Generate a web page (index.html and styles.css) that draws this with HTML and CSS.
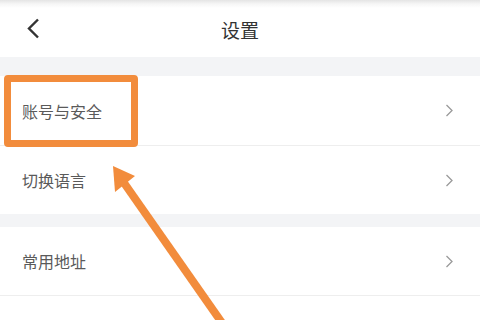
FILE: index.html
```html
<!DOCTYPE html>
<html lang="zh-CN">
<head>
<meta charset="utf-8">
<title>设置</title>
<link rel="stylesheet" href="styles.css">
</head>
<body>
<div class="page">
  <header class="header">
    <svg class="back" width="14" height="21" viewBox="0 0 14 21"><path d="M12 1.5 L3 10.5 L12 19.5" fill="none" stroke="#333" stroke-width="2.4" stroke-linejoin="miter"/></svg>
    <h1 class="title">设置</h1>
  </header>
  <div class="gap gap-top"></div>
  <section class="group">
    <div class="row row-first"><span class="label">账号与安全</span><svg class="chev" width="9" height="13" viewBox="0 0 9 13"><path d="M1.5 1 L7 6.5 L1.5 12" fill="none" stroke="#9a9a9a" stroke-width="1.3"/></svg></div>
    <div class="row"><span class="label">切换语言</span><svg class="chev" width="9" height="13" viewBox="0 0 9 13"><path d="M1.5 1 L7 6.5 L1.5 12" fill="none" stroke="#9a9a9a" stroke-width="1.3"/></svg></div>
  </section>
  <div class="gap gap-mid"></div>
  <section class="group">
    <div class="row"><span class="label">常用地址</span><svg class="chev" width="9" height="13" viewBox="0 0 9 13"><path d="M1.5 1 L7 6.5 L1.5 12" fill="none" stroke="#9a9a9a" stroke-width="1.3"/></svg></div>
    <div class="row"></div>
  </section>
  <div class="highlight"></div>
  <svg class="arrow" width="480" height="320" viewBox="0 0 480 320">
    <line x1="122" y1="180" x2="227" y2="330" stroke="#f28c3c" stroke-width="8"/>
    <polygon points="113,166 135,176 115,192" fill="#f28c3c"/>
  </svg>
</div>
</body>
</html>
```
FILE: styles.css
```css
html, body {
  margin: 0;
  padding: 0;
  background: #ffffff;
  overflow: hidden;
}
.page {
  position: relative;
  width: 480px;
  height: 320px;
  overflow: hidden;
  font-family: "Noto Sans CJK SC", "Noto Sans", sans-serif;
}
.header {
  height: 57px;
  display: flex;
  align-items: center;
  justify-content: center;
  position: relative;
  background: linear-gradient(to bottom, #e4e4e4 0px, #f6f6f6 4px, #ffffff 8px);
}
.back {
  position: absolute;
  left: 26px;
  top: 18px;
}
.title {
  margin: 0;
  font-size: 19px;
  font-weight: normal;
  color: #333333;
  line-height: 1;
  padding-top: 1px;
}
.gap {
  background: #f3f4f6;
}
.gap-top {
  height: 19px;
}
.gap-mid {
  height: 13px;
}
.group {
  background: #ffffff;
}
.row {
  height: 68px;
  display: flex;
  align-items: center;
  justify-content: space-between;
  padding: 0 26px 0 22px;
  border-bottom: 1px solid #eeeeee;
}
.row:last-child {
  border-bottom: none;
}
.row-first {
  height: 69px;
}
.label {
  font-size: 16px;
  color: #5a5a5a;
  line-height: 1;
}
.chev {
  display: block;
}
.highlight {
  position: absolute;
  left: 4px;
  top: 75px;
  width: 120px;
  height: 58px;
  border: 7px solid #f28c3c;
  border-radius: 4px;
}
.arrow {
  position: absolute;
  left: 0;
  top: 0;
}
```
